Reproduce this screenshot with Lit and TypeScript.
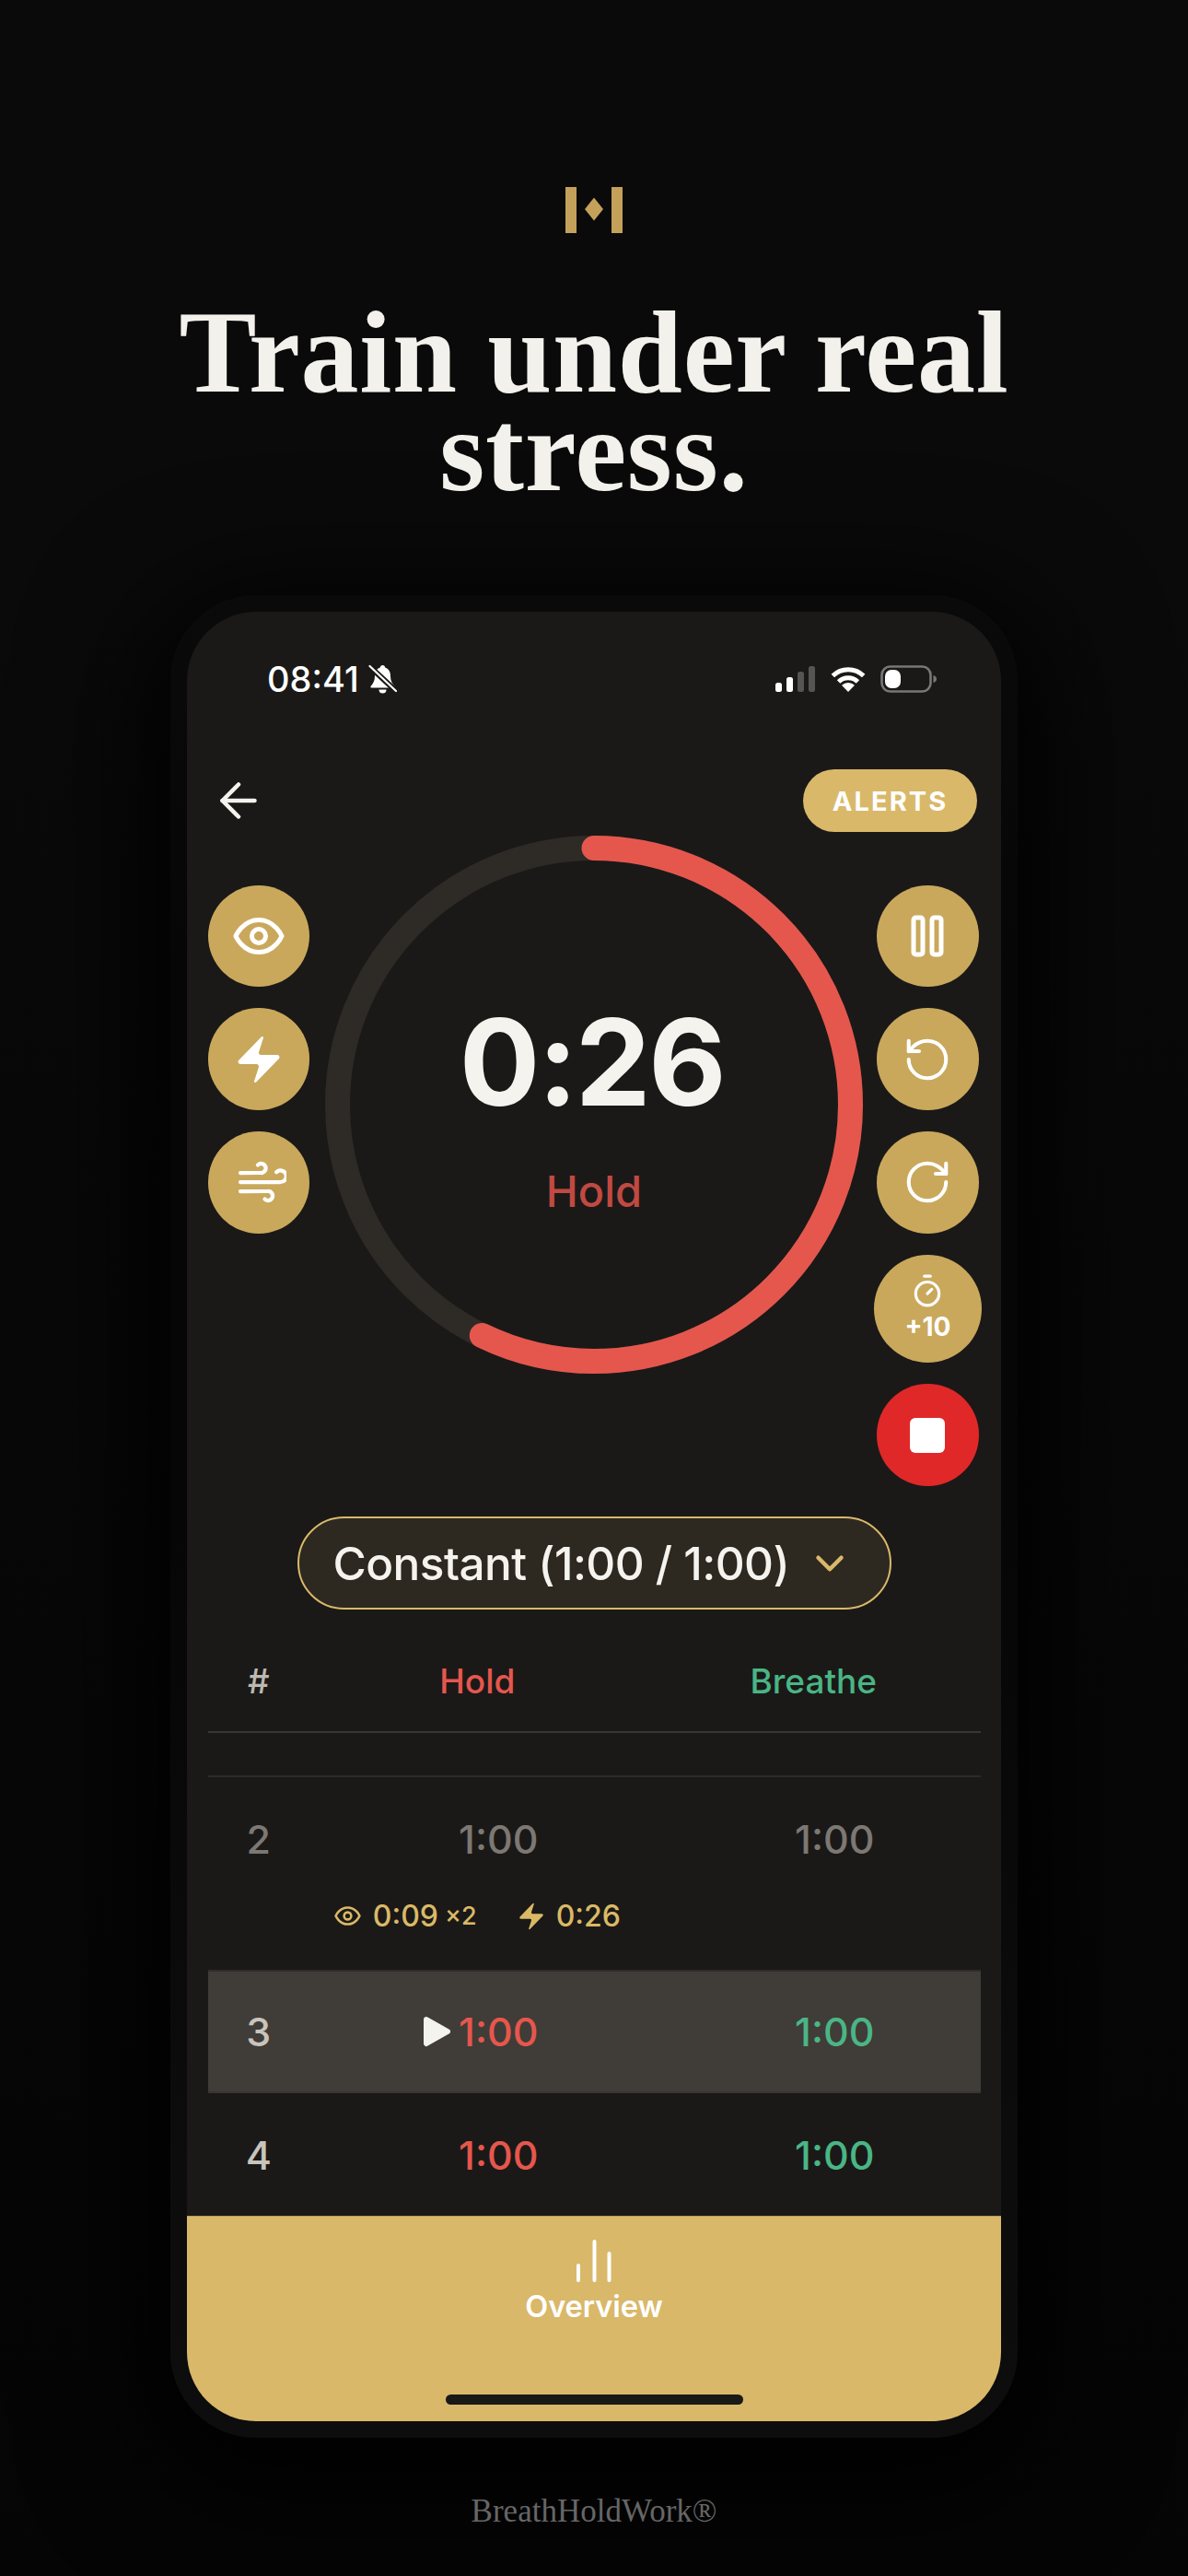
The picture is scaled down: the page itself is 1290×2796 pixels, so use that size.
import { LitElement, html, css, svg } from "lit";
import { customElement } from "lit/decorators.js";

const icon = (size: number, body: unknown, cls = "", vb = "0 0 24 24", sw = 2) => html`<svg
  class="ic ${cls}" width=${size} height=${size} viewBox=${vb} fill="none" stroke="currentColor"
  stroke-width=${sw} stroke-linecap="round" stroke-linejoin="round">${body}</svg>`;

const eye = svg`<path d="M2 12s3-7 10-7 10 7 10 7-3 7-10 7-10-7-10-7Z"/><circle cx="12" cy="12" r="3"/>`;
const zap = svg`<path fill="currentColor" stroke="none" d="M4 14a1 1 0 0 1-.78-1.63l9.9-10.2a.5.5 0 0 1 .86.46l-1.92 6.02A1 1 0 0 0 13 10h7a1 1 0 0 1 .78 1.63l-9.9 10.2a.5.5 0 0 1-.86-.46l1.92-6.02A1 1 0 0 0 11 14z"/>`;
const wind = svg`<path d="M17.7 7.7a2.5 2.5 0 1 1 1.8 4.3H2"/><path d="M9.6 4.6A2 2 0 1 1 11 8H2"/><path d="M12.6 19.4A2 2 0 1 0 14 16H2"/>`;
const pause = svg`<rect x="14" y="4" width="4" height="16" rx="1"/><rect x="6" y="4" width="4" height="16" rx="1"/>`;
const ccw = svg`<path d="M3 12a9 9 0 1 0 9-9 9.75 9.75 0 0 0-6.74 2.74L3 8"/><path d="M3 3v5h5"/>`;
const cw = svg`<path d="M21 12a9 9 0 1 1-9-9c2.52 0 4.93 1 6.74 2.74L21 8"/><path d="M21 3v5h-5"/>`;
const timer = svg`<line x1="10" x2="14" y1="2" y2="2"/><line x1="12" x2="15" y1="14" y2="11"/><circle cx="12" cy="14" r="8"/>`;
const back = svg`<path d="m12 19-7-7 7-7"/><path d="M19 12H5"/>`;
const chev = svg`<path d="m6 9 6 6 6-6"/>`;

@customElement("app-root")
export class AppRoot extends LitElement {
  static styles = css`
    :host { display: block; width: 1290px; height: 2796px; overflow: hidden;
      font-family: Inter, "Liberation Sans", sans-serif; }
    * { box-sizing: border-box; }
    .page { width: 1290px; height: 2796px; display: flex; flex-direction: column; align-items: center;
      padding-top: 203px; background: linear-gradient(#0a0a0a 0, #0a0a0a 20%, #050505 100%); }
    .logo { display: block; flex: none; }
    h1 { margin: 76px 0 0; font: 700 126px/107px "Liberation Serif", serif; color: #f2f1ec;
      text-align: center; width: 1000px; letter-spacing: .75px; position: relative; z-index: 1; }
    .frame { margin-top: 103px; flex: none; padding: 18px; border-radius: 93px;
      background: linear-gradient(#0a0a0a 0, #060606 20%, #060606 50%, #0c0c0c 85%, #0d0d0d 100%);
      box-shadow: 0 30px 130px 30px rgba(0,0,0,.95); }
    .screen { width: 884px; height: 1964px; border-radius: 75px; overflow: hidden; background: #1a1918;
      display: flex; flex-direction: column; color: #f5f3ee; }
    .ic { display: block; flex: none; }

    .status { height: 146px; flex: none; display: flex; align-items: center; padding-left: 87px; }
    .clock { font-size: 38px; font-weight: 500; color: #fff; line-height: 40px; width: 110px; }
    .bell { margin-right: 410px; }
    .sig { margin-right: 17px; }
    .wifi { margin-right: 16px; }

    .nav { height: 68px; margin-top: 25px; flex: none; display: flex; align-items: center;
      justify-content: space-between; padding: 0 26px; }
    .alerts { height: 68px; width: 189px; border-radius: 34px; background: #d9b86a; color: #fff;
      display: flex; align-items: center; justify-content: center; font-size: 29px; font-weight: 700;
      letter-spacing: 2.1px; }

    .timer { margin-top: 3.6px; height: 706px; flex: none; display: grid;
      grid-template-columns: 127.3px 596px 117px; padding-left: 22.7px; }
    .col { display: flex; flex-direction: column; align-items: center; gap: 23.4px; padding-top: 54px; }
    .left { align-items: flex-start; }
    .btn { width: 110.4px; height: 110.4px; border-radius: 50%; background: #c9a85c; color: #fff;
      display: flex; flex-direction: column; align-items: center; justify-content: center; flex: none; }
    .btn.big { width: 117px; height: 117px; justify-content: flex-start; padding-top: 20px; }
    .btn.big span { font-size: 28px; font-weight: 700; line-height: 30px; margin-top: 5px; }
    .btn.stop { background: #e02828; }
    .sq { width: 38px; height: 38px; border-radius: 6px; background: #fff; }

    .ring { width: 584px; height: 584px; display: grid; }
    .ring > * { grid-area: 1 / 1; }
    .ring svg { display: block; }
    .center { display: flex; flex-direction: column; align-items: center; padding-top: 181px; }
    .time { font-size: 130px; line-height: 130px; font-weight: 700; color: #f5f3ee; letter-spacing: -2.5px; padding-right: 5px; }
    .phase { margin-top: 50px; font-size: 47px; line-height: 50px; font-weight: 500; color: #c04a42; }

    .sel { flex: none; margin: 33.7px auto 0; width: 645px; height: 101px; border-radius: 51px;
      border: 2px solid #d9b86a; background: #2d2820; display: flex; align-items: center;
      padding-left: 37px; font-size: 49.5px; font-weight: 500; color: #f5f3ee; white-space: nowrap;
      letter-spacing: -.55px; }
    .sel .ic { color: #d9b86a; margin-left: 19px; }

    .table { margin: 0 22px 0 22.8px; flex: 1; min-height: 0; overflow: hidden; display: flex; flex-direction: column; }
    .g { display: grid; grid-template-columns: 110px 365px 365px; align-items: center; justify-items: center; }
    .head { margin-top: 22px; height: 112px; flex: none; border-bottom: 2px solid #393632;
      font-size: 37px; font-weight: 500; }
    .hash { color: #bdb8b0; }
    .hold { color: #e5574d; }
    .bre { color: #4ab585; }
    .row { height: 134px; flex: none; font-size: 43px; font-weight: 500; color: #c8c4bc; }
    .first { margin-top: 46px; border-top: 2px solid #2e2a29; height: 136px; }
    .row .v { margin-left: 46px; position: relative; line-height: 50px; }
    .done, .done .v { color: #7c7873; }
    .cur { background: #403c37; border-top: 2px solid #2f2c2a; border-bottom: 2px solid #383532; }
    .play { position: absolute; left: -39px; top: 7px; }
    .sub { height: 61px; flex: none; margin-top: -14px; margin-bottom: 28px; padding-left: 136px; display: flex; align-items: center;
      font-size: 32px; font-weight: 500; color: #dab966; line-height: 40px; }
    .sub .t { margin-left: 12px; }
    .sub small { font-size: 27px; margin-left: 7px; }
    .sub .b { margin-left: 42px; }
    .sub .b + .t { margin-left: 10px; }

    .tab { flex: none; height: 223px; background: #d9b86a; border-top: 1px solid #b89c5a; color: #fff;
      display: flex; flex-direction: column; align-items: center; padding-top: 25px; }
    .tab span { font-size: 32.500px; font-weight: 600; line-height: 40px; margin-top: 7px; }
    .home { width: 323px; height: 11px; border-radius: 6px; background: #1a1918; margin-top: 75px; }
    footer { margin-top: 60px; font: 400 35px/40px "Liberation Serif", serif; color: #666; }
  `;

  render() {
    return html`<div class="page">
      <svg class="logo" width="62" height="50" viewBox="0 0 62 50" fill="#c4a15a">
        <rect width="12" height="50"/><rect x="50" width="12" height="50"/>
        <polygon points="31,11.5 41,24 31,36.5 21,24"/>
      </svg>
      <h1>Train under real stress.</h1>
      <div class="frame"><div class="screen">
        <div class="status">
          <div class="clock">08:41</div>
          <svg class="ic bell" width="31" height="33" viewBox="0 0 31 33">
            <path fill="#fff" d="M15.5 1c-1.5 0-2.5 1-2.7 2.5C8.5 5 7 8.5 7 13c0 5-2 8-4.5 11-.5.7 0 1.5 1 1.5h24c1 0 1.5-.8 1-1.5C26 21 24 18 24 13c0-4.5-1.5-8-5.8-9.5C18 2 17 1 15.5 1z"/>
            <path fill="#fff" d="M11.5 27.5a4 4 0 0 0 8 0z"/>
            <path d="M1 2l29 27" stroke="#1a1918" stroke-width="6"/>
            <path d="M1.5 2l28.5 27" stroke="#fff" stroke-width="2.2" stroke-linecap="round"/>
          </svg>
          <svg class="ic sig" width="44" height="28" viewBox="0 0 44 28">
            <rect x="1" y="18" width="7" height="10" rx="2.5" fill="#fff"/>
            <rect x="13" y="12" width="7" height="16" rx="2.5" fill="#fff"/>
            <rect x="25" y="6" width="7" height="22" rx="2.5" fill="#555"/>
            <rect x="37" y="0" width="7" height="28" rx="2.5" fill="#555"/>
          </svg>
          <svg class="ic wifi" width="38" height="28" viewBox="0 0 38 28" fill="none" stroke="#fff" stroke-width="5">
            <path d="M2.3 10.5a24 24 0 0 1 33.4 0"/>
            <path d="M8.6 17a15 15 0 0 1 20.8 0"/>
            <path fill="#fff" stroke="none" d="M19 28l-7-7.2a10 10 0 0 1 14 0z"/>
          </svg>
          <svg class="ic" width="62" height="30" viewBox="0 0 62 30">
            <rect x="1.5" y="1.5" width="53" height="27" rx="9" fill="none" stroke="#777" stroke-width="2.6"/>
            <rect x="5" y="5" width="17" height="20" rx="7" fill="#fff"/>
            <path d="M57.5 11c2 .6 3.5 2 3.5 4s-1.500 3.400-3.500 4z" fill="#777"/>
          </svg>
        </div>

        <div class="nav">${icon(60, back, "", "0 0 24 24", 1.8)}<div class="alerts">ALERTS</div></div>

        <div class="timer">
          <div class="col left">
            <div class="btn">${icon(60, eye)}</div>
            <div class="btn">${icon(60, zap)}</div>
            <div class="btn">${icon(60, wind, "", "-2 0 24 24", 1.7)}</div>
          </div>
          <div class="ring">
            <svg width="584" height="584" viewBox="0 0 584 584" fill="none" stroke-width="27">
              <circle cx="292" cy="292" r="278.500" stroke="#2e2a26"/>
              <circle cx="292" cy="292" r="278.500" stroke="#e5574d" stroke-linecap="round"
                pathLength="100" stroke-dasharray="57.200 100" transform="rotate(-90 292 292)"/>
            </svg>
            <div class="center">
              <div class="time">0:26</div>
              <div class="phase">Hold</div>
            </div>
          </div>
          <div class="col">
            <div class="btn">${icon(60, pause)}</div>
            <div class="btn">${icon(54, ccw, "", "0 0 24 24", 1.8)}</div>
            <div class="btn">${icon(54, cw, "", "0 0 24 24", 1.8)}</div>
            <div class="btn big">${icon(38, timer)}<span>+10</span></div>
            <div class="btn stop"><div class="sq"></div></div>
          </div>
        </div>

        <div class="sel">Constant (1:00 / 1:00)${icon(50, chev, "", "0 0 24 24", 2.2)}</div>

        <div class="table">
          <div class="g head"><div class="hash">#</div><div class="hold">Hold</div><div class="bre">Breathe</div></div>
          <div class="g row first done"><div>2</div><div class="v">1:00</div><div class="v">1:00</div></div>
          <div class="sub">
            ${icon(31, eye)}<span class="t">0:09</span><small>×2</small>
            ${icon(34, zap, "b")}<span class="t">0:26</span>
          </div>
          <div class="g row cur"><div>3</div>
            <div class="v hold">
              <svg class="play" width="32" height="36" viewBox="0 0 32 36"><path fill="#f5f3ee" stroke="#f5f3ee" stroke-width="6" stroke-linejoin="round" d="M4 5l23 13L4 31z"/></svg>1:00</div>
            <div class="v bre">1:00</div></div>
          <div class="g row"><div>4</div><div class="v hold">1:00</div><div class="v bre">1:00</div></div>
        </div>

        <div class="tab">
          <svg class="ic" width="40" height="46" viewBox="0 0 40 46" fill="none" stroke="#fff" stroke-width="4" stroke-linecap="round">
            <path d="M3 28v16M20.500 2v42M36.500 15v29"/>
          </svg>
          <span>Overview</span>
          <div class="home"></div>
        </div>
      </div></div>
      <footer>BreathHoldWork®</footer>
    </div>`;
  }
}
